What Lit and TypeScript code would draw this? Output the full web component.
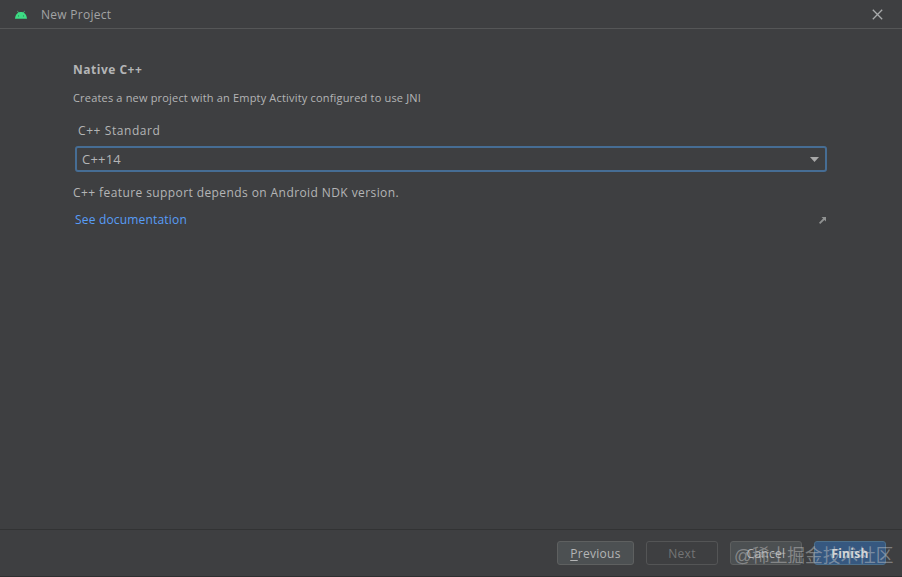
import { LitElement, html, css } from "lit";
import { customElement } from "lit/decorators.js";

@customElement("app-root")
export class AppRoot extends LitElement {
  static styles = css`
    :host {
      display: block;
      width: 902px;
      height: 577px;
      background: #3e3f41;
      color: #b4b5b6;
      font-family: "Open Sans", "Noto Sans", sans-serif;
      font-size: 12px;
      overflow: hidden;
      position: relative;
    }
    .dialog { display: flex; flex-direction: column; height: 577px; box-sizing: border-box; border-bottom: 1px solid #2e2f30; }
    .titlebar {
      flex: none;
      height: 29px;
      box-sizing: border-box;
      display: flex;
      align-items: center;
      padding: 0 19px 0 15px;
      border-bottom: 1px solid #555657;
      gap: 14px;
    }
    .title { font-size: 12px; letter-spacing: .27px; color: #a3a4a5; flex: 1; }
    .close { display: block; }
    .body {
      flex: 1;
      padding: 33px 75px 0 73px;
      display: flex;
      flex-direction: column;
      min-height: 0;
    }
    .heading { font-size: 12px; letter-spacing: .5px; font-weight: 700; line-height: 16px; height: 16px; }
    .desc { font-size: 11px; letter-spacing: .18px; line-height: 16px; margin-top: 12px; }
    .label { font-size: 12px; letter-spacing: .58px; line-height: 16px; margin: 17px 0 0 5px; }
    .combo {
      margin: 7px 0 0 2px;
      height: 26px;
      box-sizing: border-box;
      border: 2px solid #466d94;
      border-radius: 3px;
      display: flex;
      align-items: center;
      padding: 0 6px 0 5px;
      font-size: 13px;
      letter-spacing: .2px;
    }
    .combo span { flex: 1; }
    .note { font-size: 12px; letter-spacing: .41px; line-height: 16px; margin-top: 13px; }
    .linkrow { display: flex; align-items: center; justify-content: space-between; margin: 11px 1px 0 2px; }
    .link { color: #589df6; font-size: 12px; letter-spacing: .18px; line-height: 16px; }
    .footer {
      flex: none;
      height: 47px;
      border-top: 1px solid #323334;
      box-sizing: border-box;
      display: flex;
      justify-content: flex-end;
      align-items: flex-start;
      gap: 12px;
      padding: 11px 16px 0 0;
    }
    .btn {
      width: 77px;
      height: 24px;
      box-sizing: border-box;
      border: 1px solid #5e6060;
      border-radius: 3px;
      background: #4c5052;
      color: #b4b5b6;
      font-size: 12px;
      display: flex;
      align-items: center;
      justify-content: center;
      letter-spacing: .3px;
    }
    .btn.sm { width: 72px; }
    .btn u { text-underline-offset: 2px; }
    .btn.off { background: transparent; border-color: #545556; color: #747576; }
    .btn.primary { background: #365880; border-color: #4c708c; color: #d5d8da; font-weight: 700; }
    .mark {
      position: absolute;
      left: 734px;
      top: 545px;
      font-family: "Liberation Sans", "Noto Sans CJK SC", sans-serif;
      font-size: 17.7px;
      line-height: 22px;
      color: rgba(205, 205, 205, 0.45);
      white-space: nowrap;
    }
  `;

  render() {
    return html`
      <div class="dialog">
        <div class="titlebar">
          <svg width="12" height="9" viewBox="0 0 13 9">
            <path fill="#3ddc84" d="M0 9C.2 6 1.6 3.8 3.4 2.6L2.4.8 2.9.5 4 2.3C5.6 1.6 7.4 1.6 9 2.3L10.1.5 10.6.8 9.6 2.6C11.4 3.8 12.8 6 13 9Z"/>
            <circle cx="3.8" cy="6" r=".6" fill="#2f7d58"/><circle cx="9.2" cy="6" r=".6" fill="#2f7d58"/>
          </svg>
          <div class="title">New Project</div>
          <svg class="close" width="11" height="11" viewBox="0 0 11 11">
            <path d="M.8.8 10.2 10.2M10.2.8.8 10.2" stroke="#a8aaab" stroke-width="1.3" fill="none"/>
          </svg>
        </div>
        <div class="body">
          <div class="heading">Native C++</div>
          <div class="desc">Creates a new project with an Empty Activity configured to use JNI</div>
          <div class="label">C++ Standard</div>
          <div class="combo">
            <span>C++14</span>
            <svg width="9" height="5" viewBox="0 0 9 5"><path d="M0 0H9L4.5 5Z" fill="#a8a8a8"/></svg>
          </div>
          <div class="note">C++ feature support depends on Android NDK version.</div>
          <div class="linkrow">
            <span class="link">See documentation</span>
            <svg width="7" height="7" viewBox="0 0 7 7">
              <path d="M2.5 0H7V4.5L5.4 2.9 1.2 7 0 5.8 4.1 1.6Z" fill="#8f9191"/>
            </svg>
          </div>
        </div>
        <div class="footer">
          <div class="btn"><span><u>P</u>revious</span></div>
          <div class="btn off sm">Next</div>
          <div class="btn sm">Cancel</div>
          <div class="btn sm primary">Finish</div>
        </div>
      </div>
      <div class="mark">@稀土掘金技术社区</div>
    `;
  }
}
